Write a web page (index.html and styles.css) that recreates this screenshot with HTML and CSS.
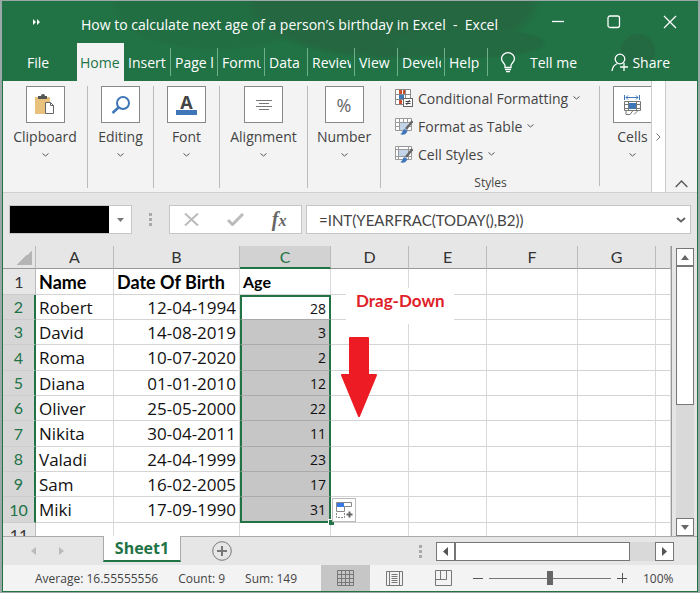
FILE: index.html
```html
<!DOCTYPE html>
<html lang="en">
<head>
    <meta charset="UTF-8">
    <meta name="viewport" content="width=device-width, initial-scale=1.0">
    <title>How to calculate next age of a person’s birthday in Excel - Excel</title>
    <link rel="stylesheet" href="styles.css">
</head>
<body>
    <div class="window">
        <header class="top">
            <div class="titlebar">
                <button class="more" aria-label="Quick access">
                    <svg width="8" height="6" viewBox="0 0 8 6"><path d="M0 0l3 3-3 3zM4 0l3 3-3 3z" fill="#fff"/></svg>
                </button>
                <h1>How to calculate next age of a person’s birthday in Excel &nbsp;-&nbsp; Excel</h1>
                <div class="win-buttons">
                    <button aria-label="Minimize"><svg width="14" height="14" viewBox="0 0 14 14"><path d="M1 6.500h12"/></svg></button>
                    <button aria-label="Maximize"><svg width="14" height="14" viewBox="0 0 14 14"><rect x="1" y="1" width="11.500" height="11.500" rx="2"/></svg></button>
                    <button aria-label="Close"><svg width="14" height="14" viewBox="0 0 14 14"><path d="M1 1l12 12M13 1L1 13"/></svg></button>
                </div>
            </div>
            <nav class="tabs">
                <button class="file">File</button>
                <button class="tab active"><span>Home</span></button>
                <button class="tab"><span>Insert</span></button>
                <button class="tab"><span>Page l</span></button>
                <button class="tab"><span>Formu</span></button>
                <button class="tab narrow"><span>Data</span></button>
                <button class="tab"><span>Review</span></button>
                <button class="tab narrow"><span>View</span></button>
                <button class="tab"><span>Develo</span></button>
                <button class="tab narrow"><span>Help</span></button>
                <button class="tell">
                    <svg width="16" height="21" viewBox="0 0 16 21"><path d="M5 15.500v-2C5 11.500 1.500 10 1.500 6.700a6.500 6 0 0 1 13 0C14.500 10 11 11.500 11 13.500v2z"/><path d="M5 17.500h6M6 19.700h4"/></svg>
                    Tell me
                </button>
                <button class="share">
                    <svg width="18" height="19" viewBox="0 0 18 19"><circle cx="9" cy="6" r="4.800"/><path d="M1 18c.5-4 2.500-6.500 5.500-7.500M13 10v8M9 14h8"/></svg>
                    Share
                </button>
            </nav>
        </header>

        <section class="ribbon">
            <button class="group clipboard">
                <span class="tile"><svg width="20" height="21" viewBox="0 0 20 21"><rect x="0" y="3" width="15" height="17" fill="#e8c17c"/><path d="M3 5V2h3a2 2 0 0 1 4 0h2v3z" fill="#555"/><path d="M10.500 8.500h5l3 3v8h-8zM15.500 8.500v3h3" fill="#fff" stroke="#666"/></svg></span>
                Clipboard
                <svg class="chev" viewBox="0 0 7 4"><path d="M.5.5l3 2.500 3-2.500"/></svg>
            </button>
            <button class="group editing">
                <span class="tile"><svg width="20" height="20" viewBox="0 0 20 20"><circle cx="12" cy="8" r="6" fill="none" stroke="#3f76b8" stroke-width="2"/><path d="M7.500 12.500L1.500 18" stroke="#3f76b8" stroke-width="2.500"/></svg></span>
                Editing
                <svg class="chev" viewBox="0 0 7 4"><path d="M.5.5l3 2.500 3-2.500"/></svg>
            </button>
            <button class="group font">
                <span class="tile letter"><b>A</b></span>
                Font
                <svg class="chev" viewBox="0 0 7 4"><path d="M.5.5l3 2.500 3-2.500"/></svg>
            </button>
            <button class="group alignment">
                <span class="tile"><svg width="16" height="12" viewBox="0 0 16 12"><path d="M0 1.500h16M3 4.500h10M0 7.500h16M3 10.500h10" stroke="#777"/></svg></span>
                Alignment
                <svg class="chev" viewBox="0 0 7 4"><path d="M.5.5l3 2.500 3-2.500"/></svg>
            </button>
            <button class="group number">
                <span class="tile percent">%</span>
                Number
                <svg class="chev" viewBox="0 0 7 4"><path d="M.5.5l3 2.500 3-2.500"/></svg>
            </button>
            <div class="styles">
                <button>
                    <svg width="18" height="18" viewBox="0 0 18 18"><path d="M.5.500h15v15H.5zM.5 5.500h15M.5 10.500h15M5.500.500v15M10.500.500v15" fill="#fff" stroke="#888"/><path d="M4 1h3v4H4zM4 11h3v4H4zM8 1h2v4H8z" fill="#c8502f"/><path d="M4 6h5v4H4z" fill="#3f76b8"/><rect x="8.500" y="9.500" width="9" height="8" fill="#fff" stroke="#666"/><path d="M10.500 12.500h5M10.500 14.500h5M14.500 11l-3 5" stroke="#444"/></svg>
                    Conditional Formatting
                    <svg class="chev" viewBox="0 0 7 4"><path d="M.5.5l3 2.500 3-2.500"/></svg>
                </button>
                <button>
                    <svg width="18" height="18" viewBox="0 0 18 18"><path d="M.5 1.500h16v12H.5zM.5 5.500h16M.5 9.500h16M4.500 1.500v12M8.500 1.500v12M12.500 1.500v12" fill="#fff" stroke="#999"/><path d="M5 6h8v7H5z" fill="#c3d3e8"/><path d="M17.500 4L11 12" stroke="#666" stroke-width="2.500"/><path d="M5 17c3-.5 2-4 4.500-5l3 2c-1 3.500-4.500 4.500-7.500 3z" fill="#3f76b8"/></svg>
                    Format as Table
                    <svg class="chev" viewBox="0 0 7 4"><path d="M.5.5l3 2.500 3-2.500"/></svg>
                </button>
                <button>
                    <svg width="18" height="18" viewBox="0 0 18 18"><path d="M.5 1.500h16v13H.5zM.5 4.500h16M.5 11.500h16M3.500 1.500v13M13.500 1.500v13" fill="#fff" stroke="#999"/><path d="M4 5h9v6H4z" fill="#c3d3e8"/><path d="M17.500 4L11 12" stroke="#666" stroke-width="2.500"/><path d="M5 17c3-.5 2-4 4.500-5l3 2c-1 3.500-4.500 4.500-7.500 3z" fill="#3f76b8"/></svg>
                    Cell Styles
                    <svg class="chev" viewBox="0 0 7 4"><path d="M.5.5l3 2.500 3-2.500"/></svg>
                </button>
                <p>Styles</p>
            </div>
            <button class="group cells">
                <span class="tile"><svg width="18" height="20" viewBox="0 0 18 20"><path d="M.5 0v5M15.500 0v5M2 2.500h12M4 .5l-2 2 2 2M12 .5l2 2-2 2" fill="none" stroke="#3f76b8"/><path d="M.5 6.500h16v9H.5zM.5 9.500h16M.5 13.500h16M4.500 6.500v9M12.500 6.500v9" fill="none" stroke="#777"/><path d="M5 8h7v6H5z" fill="#3f76b8"/><path d="M2 15.500v4h4l3-4M10 19.500l4-4" fill="none" stroke="#777"/></svg></span>
                Cells
                <svg class="chev" viewBox="0 0 7 4"><path d="M.5.5l3 2.500 3-2.500"/></svg>
            </button>
            <button class="scroll-right" aria-label="Scroll ribbon"><svg width="5" height="8" viewBox="0 0 5 8"><path d="M.5.5L4 4 .5 7.500" fill="none" stroke="#777"/></svg></button>
            <button class="collapse" aria-label="Collapse ribbon"><svg width="13" height="8" viewBox="0 0 13 8"><path d="M.7 7l5.800-6 5.800 6" fill="none" stroke="#555" stroke-width="1.300"/></svg></button>
        </section>

        <section class="formula-bar">
            <div class="name-box">
                <input type="text" aria-label="Name box">
                <button aria-label="Names"><svg width="7" height="4" viewBox="0 0 7 4"><path d="M0 0h7L3.500 4z" fill="#777"/></svg></button>
            </div>
            <span class="grip"></span>
            <div class="fx-box">
                <button aria-label="Cancel"><svg width="15" height="13" viewBox="0 0 15 13"><path d="M1 .5l13 12M14 .5L1 12.500" stroke="#bbb" stroke-width="2"/></svg></button>
                <button aria-label="Enter"><svg width="17" height="13" viewBox="0 0 17 13"><path d="M1 7l4.500 4.500L16 1" fill="none" stroke="#bbb" stroke-width="3"/></svg></button>
                <button class="fx" aria-label="Insert function">f<small>x</small></button>
            </div>
            <div class="formula">
                <input type="text" aria-label="Formula" value="=INT(YEARFRAC(TODAY(),B2))">
                <button aria-label="Expand"><svg width="10" height="6" viewBox="0 0 10 6"><path d="M1 1l4 3.500L9 1" fill="none" stroke="#666" stroke-width="2"/></svg></button>
            </div>
        </section>

        <main class="sheet">
            <div class="grid">
                <table>
                    <colgroup>
                        <col class="w-head"><col class="w-s"><col class="w-l"><col class="w-m"><col class="w-s"><col class="w-s"><col class="w-m"><col class="w-s"><col>
                    </colgroup>
                    <thead>
                        <tr><th class="corner"></th><th>A</th><th>B</th><th class="on">C</th><th>D</th><th>E</th><th>F</th><th>G</th><th></th></tr>
                    </thead>
                    <tbody>
                        <tr class="titles"><th>1</th><td>Name</td><td>Date Of Birth</td><td class="age">Age</td><td></td><td></td><td></td><td></td><td></td></tr>
                        <tr class="sel first"><th>2</th><td>Robert</td><td>12-04-1994</td><td>28</td><td></td><td></td><td></td><td></td><td></td></tr>
                        <tr class="sel"><th>3</th><td>David</td><td>14-08-2019</td><td>3</td><td></td><td></td><td></td><td></td><td></td></tr>
                        <tr class="sel"><th>4</th><td>Roma</td><td>10-07-2020</td><td>2</td><td></td><td></td><td></td><td></td><td></td></tr>
                        <tr class="sel"><th>5</th><td>Diana</td><td>01-01-2010</td><td>12</td><td></td><td></td><td></td><td></td><td></td></tr>
                        <tr class="sel"><th>6</th><td>Oliver</td><td>25-05-2000</td><td>22</td><td></td><td></td><td></td><td></td><td></td></tr>
                        <tr class="sel"><th>7</th><td>Nikita</td><td>30-04-2011</td><td>11</td><td></td><td></td><td></td><td></td><td></td></tr>
                        <tr class="sel"><th>8</th><td>Valadi</td><td>24-04-1999</td><td>23</td><td></td><td></td><td></td><td></td><td></td></tr>
                        <tr class="sel"><th>9</th><td>Sam</td><td>16-02-2005</td><td>17</td><td></td><td></td><td></td><td></td><td></td></tr>
                        <tr class="sel last"><th>10</th><td>Miki</td><td>17-09-1990</td><td>31</td><td></td><td></td><td></td><td></td><td></td></tr>
                        <tr><th>11</th><td></td><td></td><td></td><td></td><td></td><td></td><td></td><td></td></tr>
                    </tbody>
                </table>
                <div class="note">Drag-Down</div>
                <svg class="arrow" width="36" height="80" viewBox="0 0 36 80"><path d="M9 1h18v37h8L18 79 1 38h8z" fill="#ed1c24" stroke="#ed1c24" stroke-width="2" stroke-linejoin="round"/></svg>
                <span class="handle"></span>
                <button class="autofill" aria-label="Auto fill options"><svg width="17" height="16" viewBox="0 0 17 16"><path d="M.5.500h15v4H.5zM.5 4.500h8v5h-8z" fill="#fff" stroke="#888"/><path d="M1 1h7v4H1z" fill="#3b78e7"/><path d="M.5 11v4.500h8V11" fill="none" stroke="#888" stroke-dasharray="2 1"/><path d="M13.500 9.500v6M10.500 12.500h6" stroke="#666" stroke-width="2"/></svg></button>
            </div>
            <div class="vscroll">
                <button aria-label="Up"><svg width="8" height="5" viewBox="0 0 8 5"><path d="M0 5h8L4 0z" fill="#666"/></svg></button>
                <span class="thumb"></span>
                <span class="track"></span>
                <button aria-label="Down"><svg width="8" height="5" viewBox="0 0 8 5"><path d="M0 0h8L4 5z" fill="#666"/></svg></button>
            </div>
        </main>

        <section class="sheet-tabs">
            <button class="step" aria-label="Previous sheet"><svg width="5" height="8" viewBox="0 0 5 8"><path d="M5 0v8L0 4z" fill="#bbb"/></svg></button>
            <button class="step" aria-label="Next sheet"><svg width="5" height="8" viewBox="0 0 5 8"><path d="M0 0v8l5-4z" fill="#bbb"/></svg></button>
            <button class="sheet-tab">Sheet1</button>
            <button class="add" aria-label="New sheet"><svg width="20" height="20" viewBox="0 0 20 20"><circle cx="10" cy="10" r="9.300" fill="none" stroke="#777"/><path d="M10 5v10M5 10h10" stroke="#777" stroke-width="2"/></svg></button>
            <span class="grip"></span>
            <div class="hscroll">
                <button aria-label="Left"><svg width="5" height="9" viewBox="0 0 5 9"><path d="M5 0v9L0 4.500z" fill="#555"/></svg></button>
                <span class="thumb"></span>
                <span class="track"></span>
                <button aria-label="Right"><svg width="5" height="9" viewBox="0 0 5 9"><path d="M0 0v9l5-4.500z" fill="#555"/></svg></button>
            </div>
        </section>

        <footer class="status">
            <div class="stats">
                <span>Average: 16.55555556</span>
                <span>Count: 9</span>
                <span>Sum: 149</span>
            </div>
            <button class="view on" aria-label="Normal"><svg width="17" height="16" viewBox="0 0 17 16"><path d="M.5.500h16v15H.5zM.5 4.500h16M.5 8.500h16M.5 12.500h16M4.500.500v15M8.500.500v15M12.500.500v15" fill="none" stroke="#777"/></svg></button>
            <button class="view" aria-label="Page layout"><svg width="17" height="15" viewBox="0 0 17 15"><path d="M.5.500h16v14H.5zM3.500.500h10v14h-10zM5.500 3.500h6M5.500 5.500h6M5.500 7.500h6M5.500 9.500h6M5.500 11.500h6" fill="none" stroke="#777"/></svg></button>
            <button class="view" aria-label="Page break"><svg width="17" height="16" viewBox="0 0 17 16"><path d="M.5.500h16v15H.5zM.5 9.500h11v-9M5.500.500v9" fill="none" stroke="#777"/></svg></button>
            <div class="zoom">
                <button aria-label="Zoom out"><svg width="10" height="10" viewBox="0 0 10 10"><path d="M0 5.500h10" stroke="#555"/></svg></button>
                <input type="range" min="0" max="100" value="50" aria-label="Zoom">
                <button aria-label="Zoom in"><svg width="10" height="10" viewBox="0 0 10 10"><path d="M0 5.500h10M5.500 0v10" stroke="#555"/></svg></button>
                <span>100%</span>
            </div>
        </footer>
    </div>
</body>
</html>
```

FILE: styles.css
```css
* {
    box-sizing: border-box;
}
body {
    margin: 0;
    background: #9aa8a8;
    font-family: "Open Sans", "Noto Sans", sans-serif;
    font-size: 14px;
    color: #444;
}
button, input {
    font: inherit;
    color: inherit;
    padding: 0;
    margin: 0;
    border: 0;
    background: none;
    min-width: 0;
}
button {
    display: flex;
    align-items: center;
    justify-content: center;
    white-space: nowrap;
}
svg {
    flex: none;
}
.window {
    display: flex;
    flex-direction: column;
    height: calc(100vh - 2px);
    margin: 1px 2px 0;
    border: 1px solid #217346;
    border-top: 0;
    background: #e6e6e6;
    overflow: hidden;
}

/* title bar and ribbon tabs */
.top {
    color: #fff;
    background:
        radial-gradient(ellipse 80px 16px at 465px 42px, #236941 90%, transparent),
        radial-gradient(ellipse 150px 60px at 390px 0, #246740 90%, transparent),
        radial-gradient(ellipse 110px 46px at 215px 5px, #226e43 90%, transparent),
        radial-gradient(circle 18px at 635px 50px, #236941 90%, transparent),
        #217346;
}
.titlebar {
    display: flex;
    align-items: center;
    height: 42px;
}
.more {
    width: 68px;
}
h1 {
    flex: 1;
    margin: 4px 0 0 10px;
    font-size: 14px;
    font-weight: 400;
    white-space: nowrap;
}
.win-buttons {
    display: flex;
    gap: 2px;
}
.win-buttons button {
    width: 54px;
    height: 38px;
}
.win-buttons svg, .tabs svg {
    fill: none;
    stroke: #fff;
    stroke-width: 1.3;
}
.tabs {
    display: flex;
    align-items: center;
    height: 38px;
}
.file {
    width: 70px;
    margin-right: 4px;
}
.tab {
    justify-content: flex-start;
    width: 47px;
    height: 28px;
    padding: 0 3px 0 4px;
    border-right: 1px solid #6fb08a;
}
.tab span {
    overflow: hidden;
}
.tab.narrow {
    width: 43px;
}
.tab.active {
    height: 38px;
    padding: 0 3px;
    border: 0;
    background: #f3f3f3;
    color: #217346;
}
.tell {
    gap: 14px;
    margin-left: 12px;
}
.share {
    gap: 3px;
    margin-left: auto;
    margin-right: 27px;
}

/* ribbon */
.ribbon {
    display: flex;
    height: 112px;
    background: #f3f3f3;
    border-bottom: 1px solid #d0d0d0;
}
.group {
    flex-direction: column;
    justify-content: flex-start;
    height: 102px;
    margin-top: 5px;
    border-right: 1px solid #bbb;
    line-height: 20px;
}
.tile {
    display: flex;
    align-items: center;
    justify-content: center;
    width: 39px;
    height: 37px;
    margin-bottom: 4px;
    border: 1px solid #888;
    background: #fff;
}
.chev {
    width: 7px;
    height: 4px;
    fill: none;
    stroke: #555;
}
.group .chev {
    margin-top: 6px;
}
.clipboard { width: 85px; }
.editing { width: 66px; }
.font { width: 66px; }
.alignment { width: 88px; }
.number { width: 73px; }
.letter b {
    font-size: 18px;
    line-height: 15px;
    border-bottom: 5px solid #3f76b8;
    padding: 0 4px;
}
.percent {
    font-size: 18px;
    color: #666;
}
.styles {
    width: 219px;
    height: 102px;
    margin-top: 3px;
    padding-left: 14px;
    background: linear-gradient(#bbb, #bbb) right 2px / 1px 100% no-repeat;
}
.styles button {
    gap: 5px;
    height: 28px;
}
.styles p {
    margin: 6px 14px 0 0;
    font-size: 12px;
    line-height: 18px;
    text-align: center;
}
.cells {
    width: 51px;
    padding-left: 14px;
    border: 0;
    overflow: hidden;
}
.scroll-right {
    width: 15px;
    border: 1px solid #ccc;
    border-width: 0 1px;
    background: #fff;
}
.collapse {
    flex: 1;
    align-items: flex-end;
    padding-bottom: 4px;
}

/* formula bar */
.formula-bar {
    display: flex;
    align-items: center;
    height: 53px;
    padding: 0 6px;
}
.name-box, .fx-box, .formula {
    display: flex;
    height: 29px;
    border: 1px solid #c6c6c6;
    background: #fff;
}
.name-box input {
    width: 99px;
    background: #000;
    color: #fff;
}
.name-box button {
    width: 22px;
}
.grip {
    width: 3px;
    height: 13px;
    margin: 0 17px;
    background: repeating-linear-gradient(#aaa 0 3px, transparent 3px 5px);
}
.fx-box {
    width: 133px;
    margin-right: 4px;
}
.fx-box button {
    flex: 1;
}
.fx-box .fx {
    align-items: baseline;
    font: italic bold 20px/26px "Liberation Serif", serif;
    color: #666;
}
.fx small {
    font-size: 16px;
}
.formula {
    flex: 1;
    padding: 0 4px 0 12px;
}
.formula input {
    flex: 1;
    font: 15px Lato, sans-serif;
}

/* cells */
.sheet {
    flex: 1;
    display: flex;
    min-height: 0;
}
.grid {
    position: relative;
    flex: 1;
    overflow: hidden;
    background: #fff;
    border-right: 1px solid #999;
}
table {
    width: 100%;
    table-layout: fixed;
    border-collapse: separate;
    border-spacing: 0;
    font-size: 17px;
    line-height: 20px;
    color: #111;
}
.w-head { width: 33px; }
.w-s { width: 78px; }
.w-m { width: 91px; }
.w-l { width: 126px; }
th {
    padding: 0;
    font-family: Lato, sans-serif;
    font-size: 16px;
    font-weight: 400;
    background: #e6e6e6;
    color: #333;
    border-right: 1px solid #bbb;
    border-bottom: 1px solid #ccc;
}
thead th {
    height: 23px;
    border-bottom-color: #999;
}
thead .on {
    background: #d2d2d2;
    color: #217346;
    border-bottom: 2px solid #217346;
}
.corner {
    background: linear-gradient(135deg, transparent 50%, #b5b5b5 50%) 14px 4px / 15px 15px no-repeat #e6e6e6;
}
td {
    height: 25px;
    padding: 1px 3px 0;
    border-right: 1px solid #d9d9d9;
    border-bottom: 1px solid #d4d4d4;
    white-space: nowrap;
}
tbody tr:nth-child(3n+1) td {
    height: 26px;
}
.titles {
    font-family: Lato, sans-serif;
    font-size: 18px;
    font-weight: 700;
    color: #000;
}
.titles .age {
    font-size: 16px;
}
.sel th {
    background: #d6d6d6;
    color: #217346;
    border-right: 2px solid #217346;
}
.sel td:nth-child(3) {
    text-align: right;
}
.sel td:nth-child(4) {
    font-size: 14px;
    text-align: right;
    background: #c6c6c6;
    border-left: 2px solid #217346;
    border-right: 2px solid #217346;
    border-bottom-color: #aaa;
}
.sel.first td:nth-child(4) {
    background: #fff;
    border-top: 2px solid #217346;
}
.sel.last td:nth-child(4) {
    border-bottom: 2px solid #217346;
}
/* items floating above the cells */
.note {
    position: absolute;
    left: 343px;
    top: 42px;
    width: 108px;
    height: 36px;
    padding-left: 10px;
    background: #fff;
    font: bold 17px/26px Lato, sans-serif;
    color: #e02128;
}
.arrow {
    position: absolute;
    left: 338px;
    top: 91px;
}
.handle {
    position: absolute;
    left: 325px;
    top: 273px;
    width: 6px;
    height: 6px;
    background: #217346;
    border: 1px solid #fff;
    border-width: 1px 0 0 1px;
}
.autofill {
    position: absolute;
    left: 329px;
    top: 252px;
    width: 24px;
    height: 24px;
    border: 1px solid #bbb;
    background: #fff;
}
.vscroll {
    display: flex;
    flex-direction: column;
    width: 18px;
    margin: 2px 3px 0 4px;
}
.vscroll button, .hscroll button, .thumb {
    border: 1px solid #777;
    background: #fff;
}
.vscroll button {
    height: 18px;
}
.vscroll .thumb {
    flex: 138;
}
.vscroll .track {
    flex: 114;
}
.track {
    background: #d9d9d9;
}

/* sheet tabs and horizontal scroll */
.sheet-tabs {
    display: flex;
    align-items: center;
    height: 29px;
    border-top: 1px solid #aaa;
}
.step {
    width: 28px;
}
.step:first-child {
    margin-left: 16px;
}
.sheet-tab {
    align-self: flex-start;
    width: 78px;
    height: 26px;
    margin: -1px 31px 0 28px;
    border: 1px solid #aaa;
    border-width: 0 1px 2px;
    border-bottom-color: #217346;
    background: #fff;
    font-size: 16px;
    font-weight: 700;
    line-height: 20px;
    color: #217346;
}
.sheet-tabs .grip {
    margin-left: auto;
    margin-right: 14px;
}
.hscroll {
    display: flex;
    width: 238px;
    height: 19px;
    margin-right: 23px;
}
.hscroll button {
    width: 19px;
}
.hscroll .thumb {
    flex: 175;
}
.hscroll .track {
    flex: 25;
}

/* status bar */
.status {
    display: flex;
    height: 26px;
    background: #f3f3f3;
    font-size: 12px;
}
.stats {
    flex: 1;
    display: flex;
    align-items: center;
    gap: 20px;
    padding-left: 32px;
    white-space: nowrap;
}
.view {
    width: 49px;
}
.view.on {
    background: #c6c6c6;
}
.zoom {
    display: flex;
    align-items: center;
    gap: 6px;
    width: 229px;
    padding-left: 5px;
}
.zoom span {
    margin-left: 10px;
}
.zoom input {
    appearance: none;
    width: 122px;
    height: 14px;
    background: linear-gradient(#777, #777) center / 100% 1px no-repeat;
}
.zoom input::-webkit-slider-thumb {
    appearance: none;
    width: 6px;
    height: 14px;
    background: #666;
}
```
